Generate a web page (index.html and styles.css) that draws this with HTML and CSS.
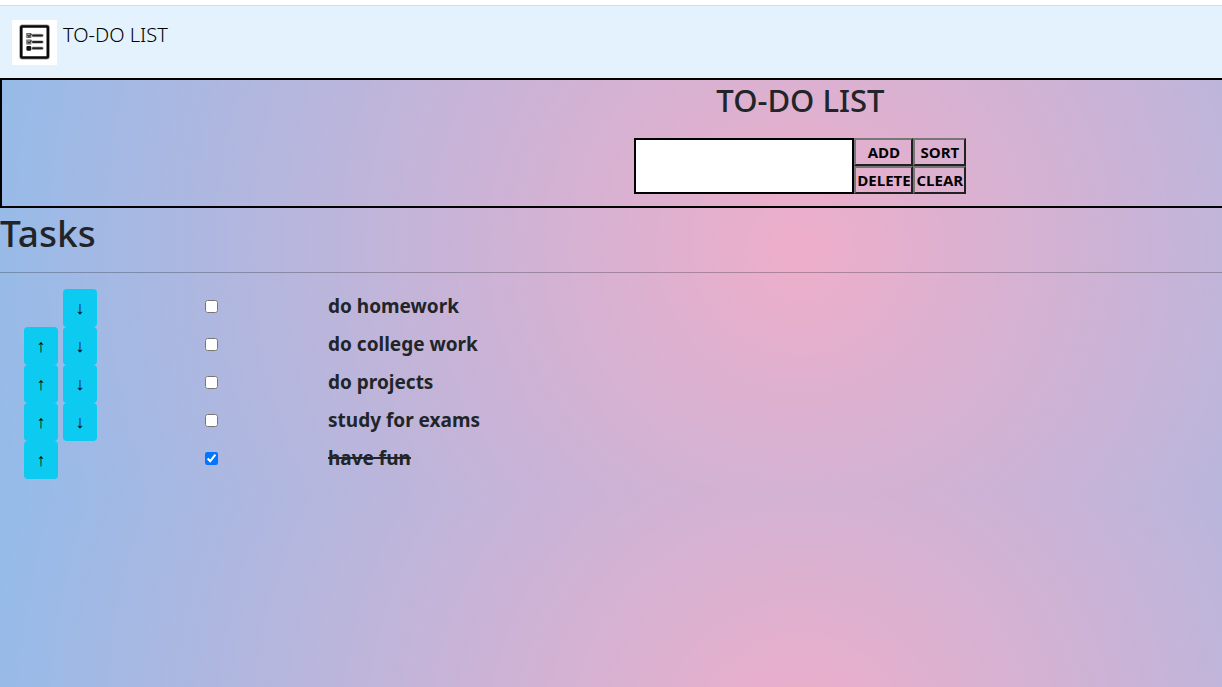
FILE: index.html
```html
<!DOCTYPE html>
<html lang="en">
<head>
<meta charset="utf-8">
<title>TO-DO LIST</title>
<link rel="stylesheet" href="styles.css">
</head>
<body>
<div class="page">
  <header class="navbar">
    <a class="brand" href="#">
      <svg class="brand-logo" viewBox="0 0 45 45" aria-hidden="true">
        <rect width="45" height="45" fill="#fff"/>
        <rect x="9.300" y="6.500" width="26.500" height="31" rx="1" fill="#fff" stroke="#999" stroke-width="4"/>
        <rect x="9.300" y="6.500" width="26.500" height="31" rx="1" fill="#fff" stroke="#0a0a0a" stroke-width="2.600"/>
        <g stroke="#bbb" stroke-width="3.600" stroke-linecap="round">
          <path d="M21 15.500H30M21 22H30M21 28.300H30"/>
        </g>
        <g stroke="#222" stroke-width="2" stroke-linecap="round">
          <path d="M21 15.500H30M21 22H30M21 28.300H30"/>
        </g>
        <g fill="#aaa" stroke="#666" stroke-width="1">
          <rect x="14.800" y="13.500" width="4" height="4"/>
          <rect x="14.800" y="20" width="4" height="4"/>
        </g>
        <path d="M15.500 15l1.500 1.500 2.500-2.500M15.500 21.500l1.500 1.500 2.500-2.500" fill="none" stroke="#333" stroke-width="1.200"/>
        <rect x="14.400" y="25.900" width="4.800" height="4.800" rx="1.200" fill="#111"/>
      </svg>
      <span class="brand-name">TO-DO LIST</span>
    </a>
  </header>
  <main>
    <form class="entry">
      <h2 class="entry-title">TO-DO LIST</h2>
      <div class="entry-controls">
        <input class="entry-input" type="text" aria-label="New task">
        <div class="entry-buttons">
          <button class="action" type="button">ADD</button>
          <button class="action" type="button">SORT</button>
          <button class="action" type="button">DELETE</button>
          <button class="action" type="button">CLEAR</button>
        </div>
      </div>
    </form>
    <h1 class="tasks-title">Tasks</h1>
    <hr class="divider">
    <ul class="tasks">
      <li class="task">
        <div class="moves"><button class="move move-down" type="button" aria-label="Move down">↓</button></div>
        <input class="check" type="checkbox" id="t1"><label class="name" for="t1">do homework</label>
      </li>
      <li class="task">
        <div class="moves"><button class="move" type="button" aria-label="Move up">↑</button><button class="move move-down" type="button" aria-label="Move down">↓</button></div>
        <input class="check" type="checkbox" id="t2"><label class="name" for="t2">do college work</label>
      </li>
      <li class="task">
        <div class="moves"><button class="move" type="button" aria-label="Move up">↑</button><button class="move move-down" type="button" aria-label="Move down">↓</button></div>
        <input class="check" type="checkbox" id="t3"><label class="name" for="t3">do projects</label>
      </li>
      <li class="task">
        <div class="moves"><button class="move" type="button" aria-label="Move up">↑</button><button class="move move-down" type="button" aria-label="Move down">↓</button></div>
        <input class="check" type="checkbox" id="t4"><label class="name" for="t4">study for exams</label>
      </li>
      <li class="task">
        <div class="moves"><button class="move" type="button" aria-label="Move up">↑</button></div>
        <input class="check" type="checkbox" id="t5" checked><label class="name" for="t5">have fun</label>
      </li>
    </ul>
  </main>
</div>
</body>
</html>
```
FILE: styles.css
```css
*, *::before, *::after { box-sizing: border-box; }

body {
  margin: 0;
  overflow-x: hidden;
  color: #212529;
  font-family: "Segoe UI", "Noto Sans", sans-serif;
  font-size: 16px;
}

.page {
  width: 131%;
  min-height: 100vh;
  background: radial-gradient(circle, rgb(238, 174, 202) 0%, rgb(148, 187, 233) 100%) 0 0 / 100% 495px;
}

.navbar {
  border-top: 5px solid #fff;
  background: #e3f2fd;
}

.brand {
  display: flex;
  align-items: flex-start;
  gap: 6px;
  padding: 14px 12px 13px;
  border-top: 1px solid #d3dde5;
  color: #000;
  text-decoration: none;
}

.brand-logo { width: 45px; height: 45px; }

.brand-name {
  font-size: 20px;
  font-weight: 300;
  line-height: 30px;
}

.entry {
  display: flex;
  flex-direction: column;
  align-items: center;
  gap: 18px;
  padding-bottom: 12px;
  border: 2px solid #000;
}

.entry-title {
  margin: 0;
  font-size: 31px;
  font-weight: 500;
  line-height: 40px;
}

.entry-controls { display: flex; }

.entry-input {
  width: 220px;
  border: 2px solid #000;
  border-radius: 0;
  background: #fff;
  font-size: 16px;
}

.entry-buttons {
  display: grid;
  grid-template-columns: 59px 53px;
  grid-auto-rows: 28px;
}

.action {
  padding: 0;
  border: 2px solid;
  border-color: #767676 #212121 #212121 #767676;
  background: transparent;
  color: #000;
  font-family: "Segoe UI", "Open Sans", sans-serif;
  font-size: 15px;
  font-weight: 700;
}

.tasks-title {
  margin: 0;
  font-size: 37px;
  font-weight: 500;
  line-height: 50px;
}

.divider {
  margin: 14px 0 16px;
  border: 0;
  border-top: 1px solid rgba(33, 37, 41, 0.3);
}

.tasks {
  margin: 0;
  padding: 0 24px;
  list-style: none;
}

.task {
  display: grid;
  grid-template-columns: 181px 123px 1fr;
}

.moves {
  display: grid;
  grid-template-columns: 34px 34px;
  gap: 5px;
}

.move {
  height: 38px;
  padding: 0;
  border: 0;
  border-radius: 4px;
  background: #0dcaf0;
  color: #000;
  font-family: "Liberation Sans", Arial, sans-serif;
  font-size: 18px;
}

.move-down { grid-column: 2; }

.check {
  width: 13px;
  height: 13px;
  margin: 11px 0 0;
}

.name {
  font-size: 19px;
  font-weight: 700;
  line-height: 34px;
}

.check:checked + .name { text-decoration: line-through 2px; }
```
